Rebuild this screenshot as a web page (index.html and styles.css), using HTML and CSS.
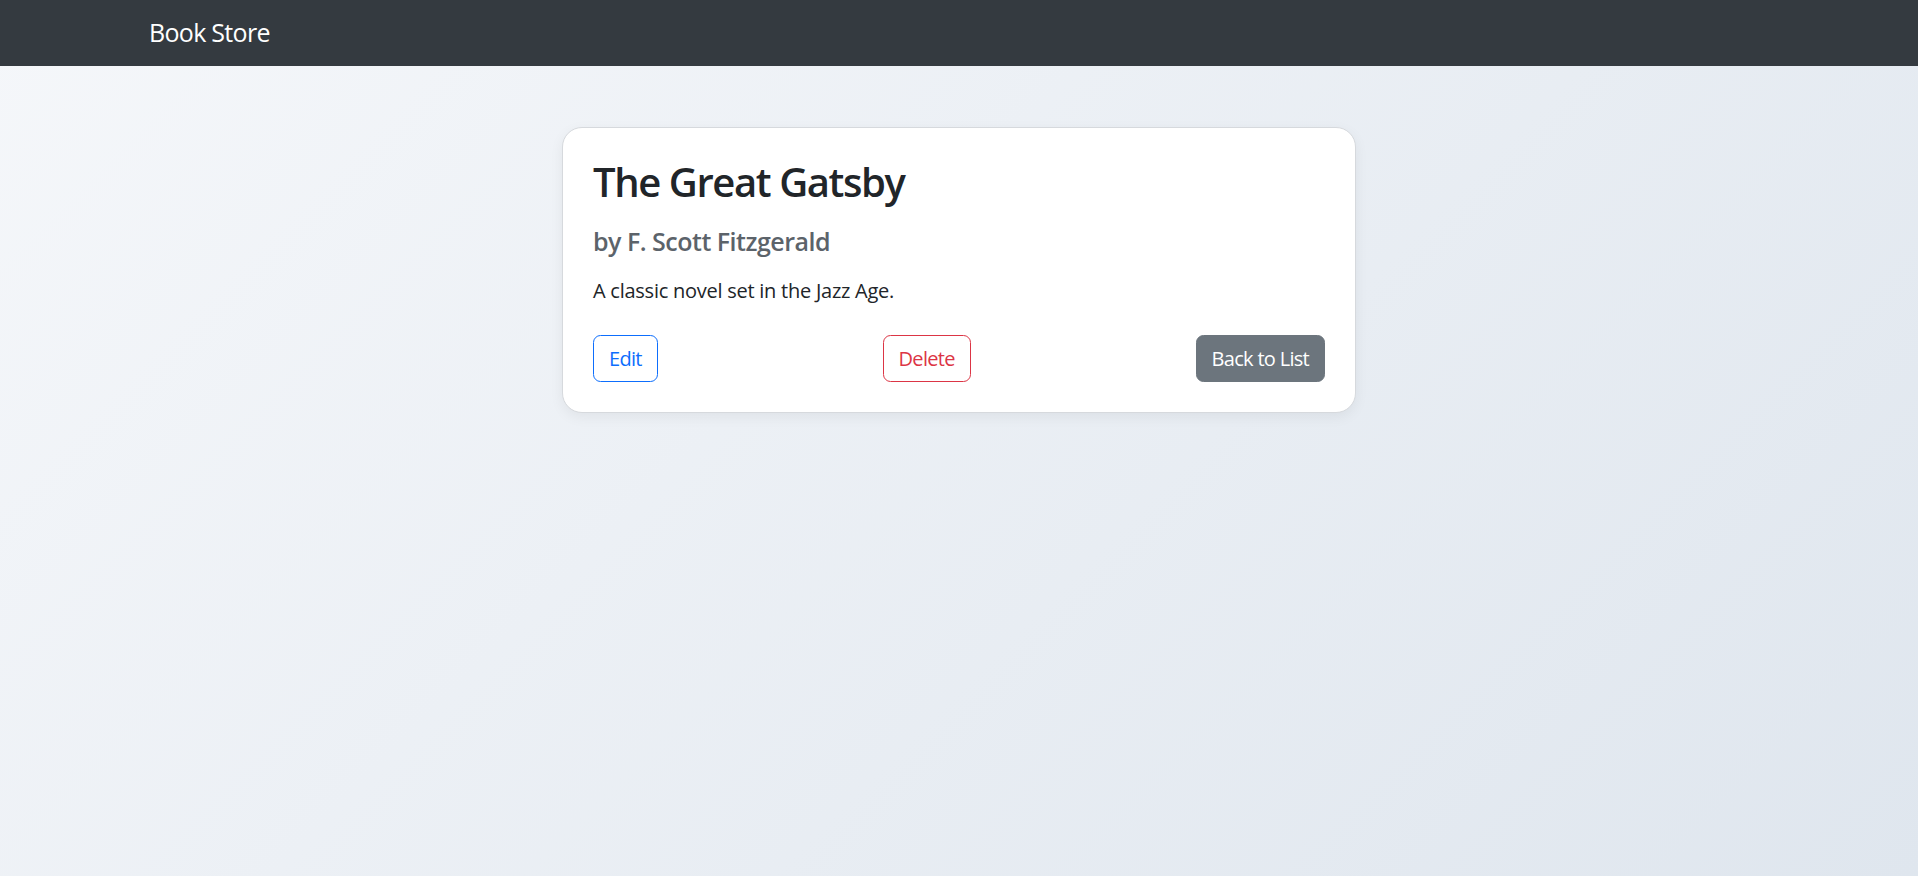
FILE: index.html
```html
<!DOCTYPE html>
<html lang="en">
<head>
<meta charset="utf-8">
<title>Book Store</title>
<link rel="stylesheet" href="styles.css">
</head>
<body>
<nav class="navbar">
  <div class="container">
    <a class="brand" href="#">Book Store</a>
  </div>
</nav>
<main class="container main">
  <div class="card">
    <h2 class="title">The Great Gatsby</h2>
    <h5 class="author">by F. Scott Fitzgerald</h5>
    <p class="desc">A classic novel set in the Jazz Age.</p>
    <div class="actions">
      <a class="btn btn-outline-primary" href="#">Edit</a>
      <a class="btn btn-outline-danger" href="#">Delete</a>
      <a class="btn btn-secondary" href="#">Back to List</a>
    </div>
  </div>
</main>
</body>
</html>
```

FILE: styles.css
```css
* { box-sizing: border-box; }
html, body { margin: 0; padding: 0; }
body {
  min-height: 100vh;
  font-family: "Open Sans", "Noto Sans", sans-serif;
  font-size: 20px;
  line-height: 1.5;
  color: #212529;
  background: linear-gradient(135deg, #f5f7fa 0%, #dfe6ee 100%);
}
.container {
  max-width: 1650px;
  margin: 0 auto;
  padding: 0 15px;
}
.navbar {
  background: #343a40;
  height: 66px;
  display: flex;
  align-items: center;
}
.navbar .container { width: 100%; }
.brand {
  color: #fff;
  text-decoration: none;
  font-size: 25px;
  line-height: 1.5;
  letter-spacing: -0.7px;
}
.main { padding-top: 61px; }
.card {
  width: 794px;
  margin: 0 auto;
  background: #fff;
  border: 1px solid #d6d9dd;
  border-radius: 20px;
  box-shadow: 0 4px 14px rgba(0, 0, 0, 0.06);
  padding: 30px;
}
.title {
  margin: 0 0 20px;
  font-size: 40px;
  line-height: 48px;
  font-weight: 600;
  letter-spacing: -1.4px;
  color: #212529;
}
.author {
  margin: 0 0 20px;
  font-size: 25px;
  line-height: 30px;
  font-weight: 600;
  letter-spacing: -0.5px;
  color: #5c636a;
}
.desc {
  margin: 0 0 29px;
  font-size: 20px;
  line-height: 30px;
  letter-spacing: -0.25px;
}
.actions {
  display: flex;
  justify-content: space-between;
  align-items: center;
}
.btn {
  display: inline-block;
  padding: 7.5px 15px;
  font-size: 20px;
  line-height: 30px;
  letter-spacing: -0.7px;
  border: 1px solid transparent;
  border-radius: 7.5px;
  text-decoration: none;
}
.btn-outline-primary { color: #0d6efd; border-color: #0d6efd; }
.btn-outline-danger { color: #dc3545; border-color: #dc3545; }
.btn-secondary { color: #fff; background: #6c757d; border-color: #6c757d; }
```
